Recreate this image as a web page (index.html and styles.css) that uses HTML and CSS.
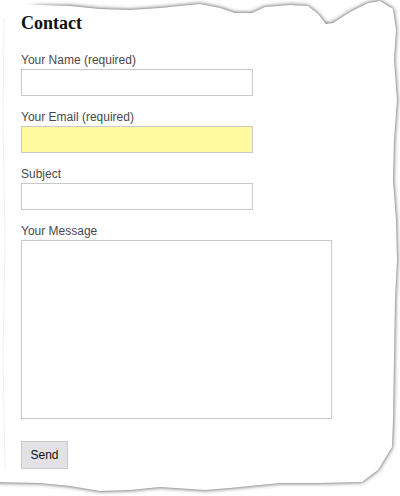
FILE: index.html
```html
<!DOCTYPE html>
<html>
<head>
<meta charset="utf-8">
<link rel="stylesheet" href="styles.css">
</head>
<body>
<svg class="paper" width="400" height="496" viewBox="0 0 400 496" aria-hidden="true">
  <defs>
    <filter id="sh" x="-10%" y="-10%" width="120%" height="120%">
      <feGaussianBlur stdDeviation="2"/>
    </filter>
  </defs>
  <path class="paper-shadow" filter="url(#sh)" d="M-20 10 L20 9 L40 6 L70 6 L100 9 L130 10 L160 8 L200 4 L220 8 L235 13 L252 13 L265 7 L290 5 L308 6 L318 14 L326 24 L333 23 L350 12 L368 3 L380 1 L393 9 L396 30 L394 60 L397 100 L394 140 L393 180 L396 220 L397 260 L395 300 L394 360 L393 420 L392 447 L378 470 L362 482 L320 483 L280 483 L250 486 L230 488 L205 490 L160 487 L130 490 L100 491 L70 486 L40 483 L-20 482 Z"/>
  <path class="paper-sheet" d="M-20 4 L20 4 L40 5 L70 6 L100 9 L130 10 L160 8 L200 4 L220 8 L235 13 L252 13 L265 7 L290 5 L308 6 L318 14 L326 24 L333 23 L350 12 L368 3 L380 1 L393 9 L396 30 L394 60 L397 100 L394 140 L393 180 L396 220 L397 260 L395 300 L394 360 L393 420 L392 447 L378 470 L362 482 L320 483 L280 483 L250 486 L230 488 L205 490 L160 487 L130 490 L100 491 L70 486 L40 483 L-20 482 Z"/>
  <path class="paper-edge" d="M4 18 L3 120 L5 240 L3 360 L5 470"/>
</svg>
<main class="form-wrap">
  <h2 class="title">Contact</h2>
  <form class="form">
    <div class="field">
      <label class="label">Your Name (required)</label>
      <input class="input" type="text">
    </div>
    <div class="field">
      <label class="label">Your Email (required)</label>
      <input class="input input-hl" type="text">
    </div>
    <div class="field">
      <label class="label">Subject</label>
      <input class="input" type="text">
    </div>
    <div class="field">
      <label class="label">Your Message</label>
      <textarea class="textarea"></textarea>
    </div>
    <div class="actions">
      <button class="send" type="button">Send</button>
    </div>
  </form>
</main>
</body>
</html>
```
FILE: styles.css
```css
html, body {
  margin: 0;
  padding: 0;
  background: #ffffff;
}
body {
  width: 400px;
  height: 496px;
  overflow: hidden;
  position: relative;
  font-family: "Liberation Sans", Arial, sans-serif;
}
.paper {
  position: absolute;
  left: 0;
  top: 0;
  z-index: 0;
}
.paper-shadow {
  fill: #3a3a3a;
}
.paper-sheet {
  fill: #ffffff;
}
.paper-edge {
  fill: none;
  stroke: #f0f0f0;
  stroke-width: 1;
}
.form-wrap {
  position: relative;
  z-index: 1;
  padding: 12px 0 0 21px;
}
.title {
  margin: 0 0 18px 0;
  font-family: "Liberation Serif", "Times New Roman", serif;
  font-weight: bold;
  font-size: 18px;
  line-height: 22px;
  color: #111;
}
.form {
  display: flex;
  flex-direction: column;
  margin: 0;
}
.field {
  display: flex;
  flex-direction: column;
  align-items: flex-start;
  margin-bottom: 13px;
}
.label {
  display: block;
  font-size: 12px;
  line-height: 16px;
  color: #4a4a4a;
  margin-bottom: 1px;
}
.input {
  box-sizing: border-box;
  width: 232px;
  height: 27px;
  margin: 0;
  padding: 2px 4px;
  border: 1px solid #c8c8c8;
  background: #ffffff;
  font-family: inherit;
  font-size: 12px;
  outline: none;
}
.input-hl {
  background: #fffa9f;
}
.textarea {
  box-sizing: border-box;
  width: 311px;
  height: 179px;
  margin: 0;
  padding: 2px 4px;
  border: 1px solid #c8c8c8;
  background: #ffffff;
  resize: none;
  font-family: inherit;
  font-size: 12px;
  outline: none;
}
.actions {
  margin-top: 9px;
  display: flex;
}
.send {
  box-sizing: border-box;
  width: 47px;
  height: 28px;
  margin: 0;
  padding: 0;
  border: 1px solid #cacaca;
  background: #e2e2e6;
  font-family: "Liberation Sans", Arial, sans-serif;
  font-size: 12px;
  color: #111;
}
```
